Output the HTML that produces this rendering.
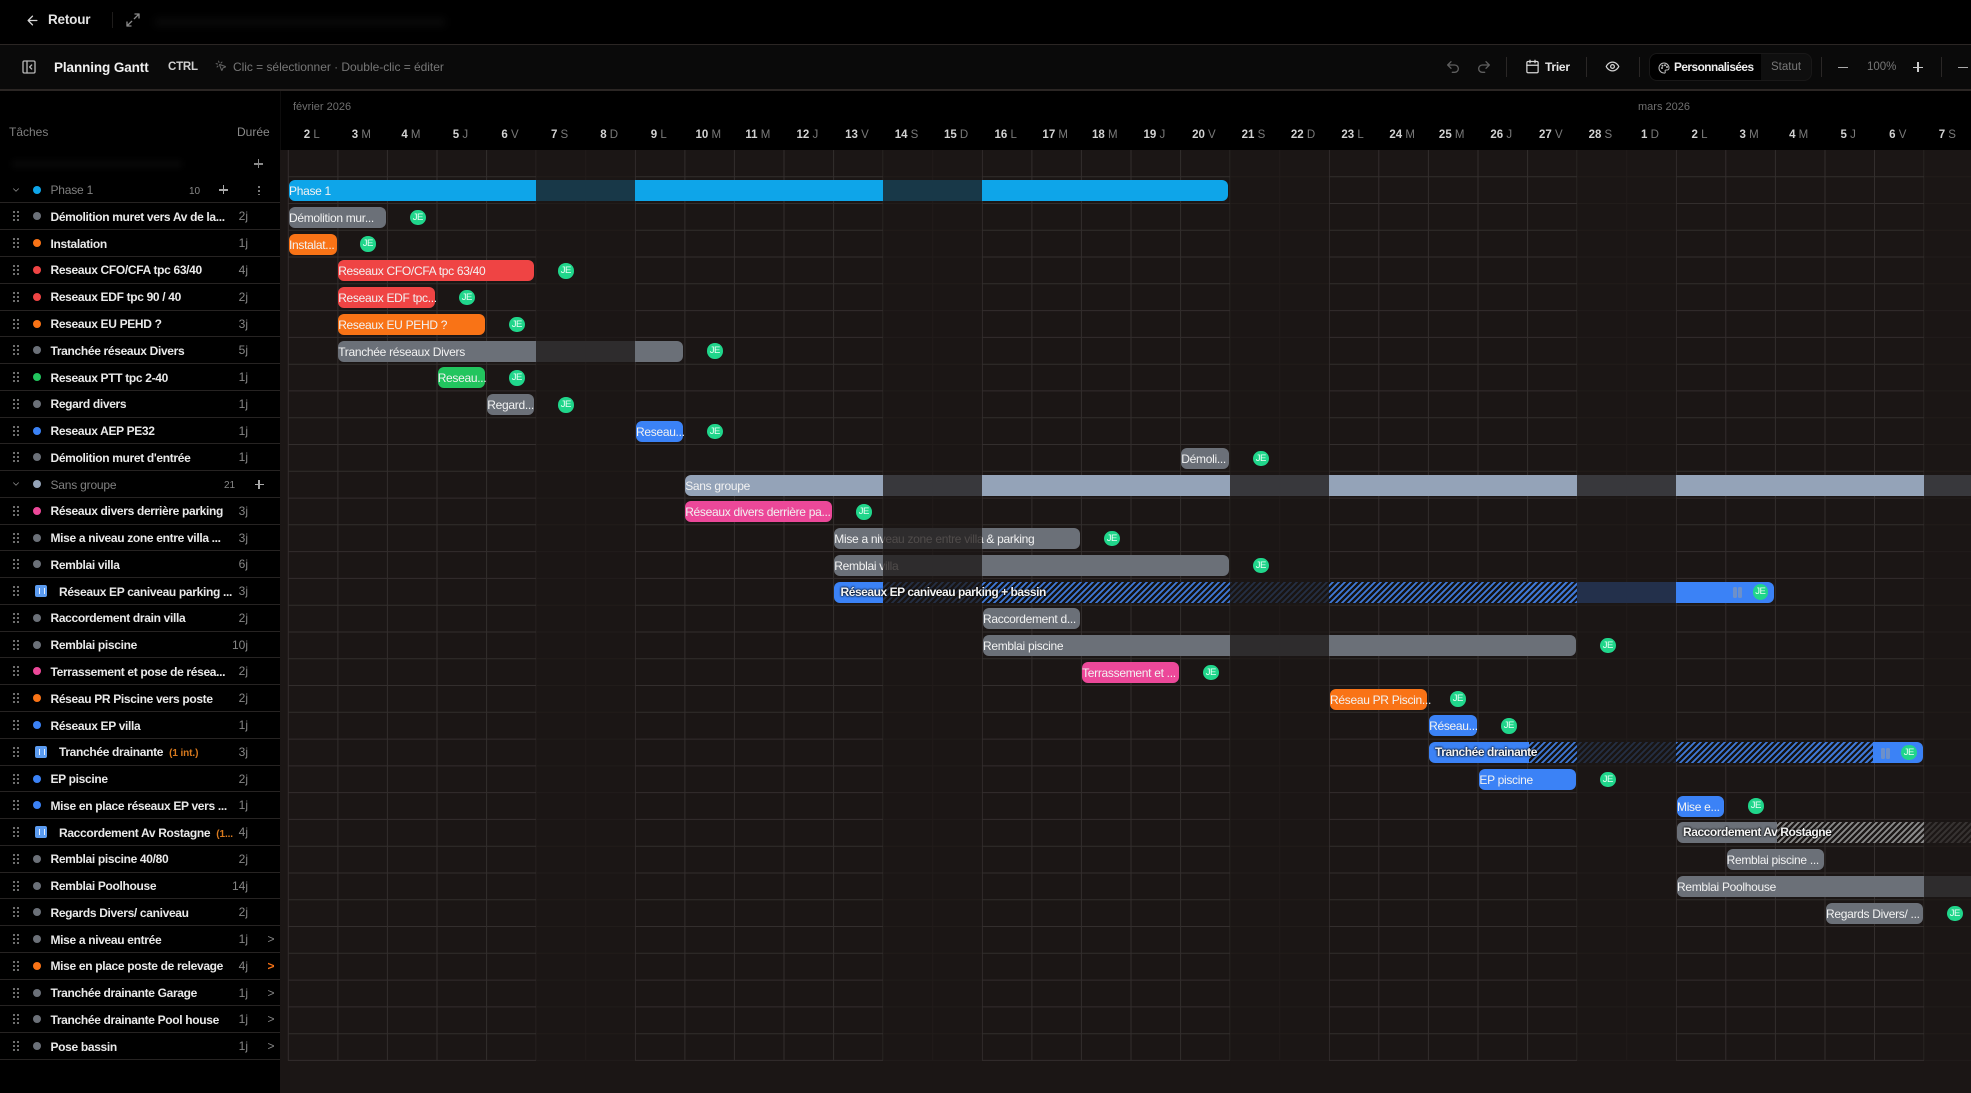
<!DOCTYPE html>
<html lang="fr"><head><meta charset="utf-8"><title>Planning Gantt</title>
<style>
*{box-sizing:border-box}
html,body{margin:0;padding:0;background:#000;width:1971px;height:1093px;overflow:hidden}
body{position:relative;font-family:"Liberation Sans",Arial,sans-serif;font-size:12px;color:#eee}
.abs{position:absolute}
svg{position:absolute;fill:none;stroke:currentColor;stroke-width:2;stroke-linecap:round;stroke-linejoin:round}
.sep{position:absolute;width:1px;background:#2a2726}
#top{position:absolute;left:0;top:0;width:1971px;height:45px;background:#000;border-bottom:1px solid #2b2624}
#bar{position:absolute;left:0;top:45px;width:1971px;height:46px;background:#0a0a0a;border-bottom:2px solid #2b2624}
.t{position:absolute;white-space:nowrap}
#hdr{position:absolute;left:0;top:91px;width:1971px;height:59px;background:#000}
#days{position:absolute;left:287px;top:126px;display:flex;height:18px}
#days span{display:block;width:49.57px;flex:none;text-align:center;color:#7a7a7a;font-size:11.5px;line-height:18px;white-space:nowrap}
#days b{color:#d2d2d2;font-weight:bold}
#side{position:absolute;left:0;top:150px;width:280px;height:943px;background:#000}
.s{position:relative;height:26.78px;border-bottom:1px solid #262322;line-height:25px}
.s i{position:absolute}
.h{left:12px;top:7px;width:8px;height:12px;background:radial-gradient(circle,#7d7d7d .95px,transparent 1.2px) 0 0/4px 4px}
.d{left:33px;top:9px;width:8px;height:8px;border-radius:50%}
.p{left:35px;top:7px;width:12px;height:12px;border-radius:2px;background:#5b9bf0}
.p:after{content:"";position:absolute;left:4px;top:3px;width:4px;height:6px;border-left:1.5px solid #e8f0ff;border-right:1.5px solid #e8f0ff}
.n{position:absolute;left:50.5px;top:1.5px;white-space:nowrap;color:#e9e9e9;font-size:12px;font-weight:bold;letter-spacing:-.33px}
.n.i{left:59px}
.n small{color:#d97a1e;font-size:10px;font-weight:bold;margin-left:3px;letter-spacing:-.1px}
.n.g{color:#808080;font-weight:normal;font-size:12px;letter-spacing:-.2px;top:1.5px}
.j{position:absolute;right:32px;top:1px;color:#868686;font-size:12px}
.c{position:absolute;left:267.5px;top:1px;color:#888;font-size:12px}
#grid{position:absolute;left:280px;top:150px;width:1691px;height:943px;background:#1b1615}
.we{position:absolute;top:150px;height:911px;background:rgba(27,22,21,.76);z-index:2}
#g{position:absolute;left:0;top:176.7px;width:1971px;height:900px;overflow:hidden}
.r{position:relative;height:26.78px}
.b{position:absolute;top:3.4px;height:21px;border-radius:6px;line-height:22px;color:#f2f2f2;font-size:12px;letter-spacing:-.3px;white-space:nowrap;z-index:1}
.a{position:absolute;top:6.2px;width:15.5px;height:15.5px;border-radius:50%;background:#20d68b;color:#e9fff5;font-size:9.5px;line-height:15.5px;text-align:center;font-weight:normal;z-index:3;letter-spacing:-.6px}
.gr{background:#6b7078}.or{background:#f97316}.re{background:#ef4444}.gn{background:#22c55e}.bl{background:#3b82f6}.pk{background:#ec4899}.sl{background:#94a3b8}.sk{background:#0ea5e9}
.ha{position:absolute;top:3.4px;height:21px;z-index:1;background:repeating-linear-gradient(-45deg,#3f78d6 0,#3f78d6 1.8px,#141314 1.8px,#141314 4.24px)}
.hg{background:repeating-linear-gradient(-45deg,#8b8b8b 0,#8b8b8b 1.8px,#1e1a19 1.8px,#1e1a19 4.24px)}
.lb{position:absolute;top:3.4px;line-height:21px;font-size:12px;font-weight:bold;letter-spacing:-.45px;color:#f4f4f4;white-space:nowrap;z-index:3;text-shadow:0 0 2px #000,0 0 2px #000}
.pa{position:absolute;top:9px;width:3.5px;height:11px;border-radius:1.5px;background:#7f94ba;opacity:.75;z-index:3}
</style></head><body>

<div id="top">
<svg style="left:25px;top:13px;color:#d5d5d5" width="15" height="15" viewBox="0 0 24 24"><path d="M19 12H5M12 19l-7-7 7-7"/></svg>
<span class="t" style="left:48px;top:12px;font-size:13.5px;color:#e3e3e3;font-weight:bold;line-height:16px;letter-spacing:-.2px">Retour</span>
<div class="sep" style="left:112px;top:12px;height:16px;background:#1e1c1b"></div>
<svg style="left:125px;top:12px;color:#8a8a8a" width="16" height="16" viewBox="0 0 24 24" stroke-width="1.6"><path d="M21 3l-7 7M3 21l7-7M15 3h6v6M9 21H3v-6"/></svg>
<div class="abs" style="left:155px;top:18px;width:290px;height:8px;background:#0a0a0a;filter:blur(4px)"></div>
</div>

<div id="bar">
<svg style="left:21px;top:14px;color:#b5b5b5" width="16" height="16" viewBox="0 0 24 24"><rect x="3" y="3" width="18" height="18" rx="2"/><path d="M9 3v18M16 15l-3-3 3-3"/></svg>
<span class="t" style="left:54px;top:14px;font-size:13.5px;font-weight:bold;color:#f0f0f0;line-height:17px;letter-spacing:-.1px">Planning Gantt</span>
<span class="t" style="left:168px;top:14px;font-size:11.5px;font-weight:bold;color:#d0d0d0;line-height:16px;letter-spacing:-.2px">CTRL</span>
<svg style="left:215px;top:15px;color:#666" width="12" height="12" viewBox="0 0 24 24"><path d="M14 4.1 12 6M5.1 8l-2.9-.8M6 12l-1.9 2M7.2 2.2 8 5.1M9.04 9.65a.5.5 0 0 1 .61-.61l11 4a.5.5 0 0 1 .02.94l-4.3 1.6a1 1 0 0 0-.6.6l-1.6 4.3a.5.5 0 0 1-.94-.02z"/></svg>
<span class="t" style="left:233px;top:14px;font-size:12px;color:#767676;line-height:16px;letter-spacing:-.03px">Clic = sélectionner · Double-clic = éditer</span>

<svg style="left:1445px;top:14px;color:#5f5f5f" width="16" height="16" viewBox="0 0 24 24"><path d="M9 14 4 9l5-5M4 9h10.5a5.5 5.5 0 0 1 0 11H11"/></svg>
<svg style="left:1476px;top:14px;color:#5f5f5f" width="16" height="16" viewBox="0 0 24 24"><path d="M15 14l5-5-5-5M20 9H9.5a5.5 5.5 0 0 0 0 11H13"/></svg>
<div class="sep" style="left:1506px;top:12px;height:20px"></div>
<svg style="left:1525px;top:14px;color:#d8d8d8" width="15" height="15" viewBox="0 0 24 24"><path d="M8 2v4M16 2v4M3 10h18"/><rect x="3" y="4" width="18" height="18" rx="2"/></svg>
<span class="t" style="left:1545px;top:14px;font-size:12px;font-weight:bold;color:#e6e6e6;line-height:16px;letter-spacing:-.25px">Trier</span>
<div class="sep" style="left:1586px;top:12px;height:20px"></div>
<svg style="left:1605px;top:14px;color:#d4d4d4" width="15" height="15" viewBox="0 0 24 24"><path d="M2 12s3-7 10-7 10 7 10 7-3 7-10 7-10-7-10-7Z"/><circle cx="12" cy="12" r="3"/></svg>
<div class="sep" style="left:1639px;top:12px;height:20px"></div>
<div class="abs" style="left:1649px;top:8px;width:163px;height:28px;background:#0f0f0f;border:1px solid #191818;border-radius:8px"></div>
<div class="abs" style="left:1650px;top:9px;width:111px;height:26px;background:#000;border-radius:7px 0 0 7px"></div>
<svg style="left:1658px;top:17px;color:#bdbdbd" width="12" height="12" viewBox="0 0 24 24"><path d="M12 22a10 10 0 1 1 10-10c0 2.5-2 4-4 4h-2a2 2 0 0 0-1.5 3.3A2 2 0 0 1 12 22z"/><circle cx="8" cy="12" r="1"/><circle cx="9" cy="7.5" r="1"/><circle cx="14" cy="6.5" r="1"/><circle cx="18" cy="10" r="1"/></svg>
<span class="t" style="left:1674px;top:14px;font-size:11.8px;font-weight:bold;color:#ededed;line-height:16px;letter-spacing:-.5px">Personnalisées</span>
<span class="t" style="left:1771px;top:14px;font-size:11.5px;color:#777;line-height:16px">Statut</span>
<div class="sep" style="left:1821px;top:12px;height:20px"></div>
<span class="abs" style="left:1838px;top:21.5px;width:10px;height:1.6px;background:#aaa"></span>
<span class="t" style="left:1867px;top:14px;font-size:11.5px;color:#777;line-height:16px">100%</span>
<span class="abs" style="left:1913px;top:21.5px;width:10px;height:1.6px;background:#ccc"></span>
<span class="abs" style="left:1917.2px;top:17.3px;width:1.6px;height:10px;background:#ccc"></span>
<div class="sep" style="left:1941px;top:12px;height:20px"></div>
<span class="abs" style="left:1958px;top:21.5px;width:10px;height:1.6px;background:#aaa"></span>
</div>

<div id="hdr">
<span class="t" style="left:9px;top:33px;color:#7e7e7e;font-size:12px;line-height:16px">Tâches</span>
<span class="t" style="left:237px;top:33px;color:#8a8a8a;font-size:12px;line-height:16px">Durée</span>
<span class="t" style="left:293px;top:9px;color:#6f6f6f;font-size:11px;line-height:15px">février 2026</span>
<span class="t" style="left:1638px;top:9px;color:#6f6f6f;font-size:11px;line-height:15px">mars 2026</span>
<div class="abs" style="left:280px;top:0;width:1px;height:59px;background:#0d0c0c"></div>
</div>
<div id="days"><span><b>2</b> L</span><span><b>3</b> M</span><span><b>4</b> M</span><span><b>5</b> J</span><span><b>6</b> V</span><span><b>7</b> S</span><span><b>8</b> D</span><span><b>9</b> L</span><span><b>10</b> M</span><span><b>11</b> M</span><span><b>12</b> J</span><span><b>13</b> V</span><span><b>14</b> S</span><span><b>15</b> D</span><span><b>16</b> L</span><span><b>17</b> M</span><span><b>18</b> M</span><span><b>19</b> J</span><span><b>20</b> V</span><span><b>21</b> S</span><span><b>22</b> D</span><span><b>23</b> L</span><span><b>24</b> M</span><span><b>25</b> M</span><span><b>26</b> J</span><span><b>27</b> V</span><span><b>28</b> S</span><span><b>1</b> D</span><span><b>2</b> L</span><span><b>3</b> M</span><span><b>4</b> M</span><span><b>5</b> J</span><span><b>6</b> V</span><span><b>7</b> S</span></div>

<div id="grid"></div>
<svg style="left:0;top:0;color:#332e2d;stroke-width:1;stroke-linecap:butt" width="1971" height="1093" viewBox="0 0 1971 1093"><path d="M288.3 150V1060.8M337.9 150V1060.8M387.4 150V1060.8M437 150V1060.8M486.6 150V1060.8M536.2 150V1060.8M585.7 150V1060.8M635.3 150V1060.8M684.9 150V1060.8M734.4 150V1060.8M784 150V1060.8M833.6 150V1060.8M883.1 150V1060.8M932.7 150V1060.8M982.3 150V1060.8M1031.9 150V1060.8M1081.4 150V1060.8M1131 150V1060.8M1180.6 150V1060.8M1230.1 150V1060.8M1279.7 150V1060.8M1329.3 150V1060.8M1378.8 150V1060.8M1428.4 150V1060.8M1478 150V1060.8M1527.6 150V1060.8M1577.1 150V1060.8M1626.7 150V1060.8M1676.3 150V1060.8M1725.8 150V1060.8M1775.4 150V1060.8M1825 150V1060.8M1874.5 150V1060.8M1924.1 150V1060.8"/><path d="M288 176.7H1971M288 203.5H1971M288 230.3H1971M288 257H1971M288 283.8H1971M288 310.6H1971M288 337.4H1971M288 364.2H1971M288 390.9H1971M288 417.7H1971M288 444.5H1971M288 471.3H1971M288 498.1H1971M288 524.8H1971M288 551.6H1971M288 578.4H1971M288 605.2H1971M288 632H1971M288 658.7H1971M288 685.5H1971M288 712.3H1971M288 739.1H1971M288 765.9H1971M288 792.6H1971M288 819.4H1971M288 846.2H1971M288 873H1971M288 899.8H1971M288 926.5H1971M288 953.3H1971M288 980.1H1971M288 1006.9H1971M288 1033.7H1971M288 1060.4H1971"/></svg>
<div class="we" style="left:535.85px;width:99.14px"></div>
<div class="we" style="left:882.84px;width:99.14px"></div>
<div class="we" style="left:1229.83px;width:99.14px"></div>
<div class="we" style="left:1576.82px;width:99.14px"></div>
<div class="we" style="left:1923.81px;width:48px"></div>

<div id="g">
<div class="r"><div class="b sk" style="left:289px;width:938.6px;border-radius:6px"><span style="position:relative">Phase 1</span></div></div>
<div class="r"><div class="b gr" style="left:289px;width:97px">Démolition mur...</div><div class="a" style="left:410px">JE</div></div>
<div class="r"><div class="b or" style="left:289px;width:47.5px">Instalat...</div><div class="a" style="left:360px">JE</div></div>
<div class="r"><div class="b re" style="left:338.2px;width:195.9px">Reseaux CFO/CFA tpc 63/40</div><div class="a" style="left:558px">JE</div></div>
<div class="r"><div class="b re" style="left:338.2px;width:97px">Reseaux EDF tpc...</div><div class="a" style="left:459px">JE</div></div>
<div class="r"><div class="b or" style="left:338.2px;width:147.1px">Reseaux EU PEHD ?</div><div class="a" style="left:509px">JE</div></div>
<div class="r"><div class="b gr" style="left:338.2px;width:344.4px">Tranchée réseaux Divers</div><div class="a" style="left:707px">JE</div></div>
<div class="r"><div class="b gn" style="left:437.7px;width:47.6px">Reseau...</div><div class="a" style="left:509px">JE</div></div>
<div class="r"><div class="b gr" style="left:487.3px;width:47px">Regard...</div><div class="a" style="left:558px">JE</div></div>
<div class="r"><div class="b bl" style="left:636px;width:47px">Reseau...</div><div class="a" style="left:707px">JE</div></div>
<div class="r"><div class="b gr" style="left:1181.3px;width:47.5px">Démoli...</div><div class="a" style="left:1253px">JE</div></div>
<div class="r"><div class="b sl" style="left:685.2px;width:1300px">Sans groupe</div></div>
<div class="r"><div class="b pk" style="left:685.2px;width:146.6px">Réseaux divers derrière pa...</div><div class="a" style="left:856px">JE</div></div>
<div class="r"><div class="b gr" style="left:834.3px;width:245.8px">Mise a niveau zone entre villa &amp; parking</div><div class="a" style="left:1104px">JE</div></div>
<div class="r"><div class="b gr" style="left:834.3px;width:394.5px">Remblai villa</div><div class="a" style="left:1253px">JE</div></div>
<div class="r"><div class="b bl" style="left:834.3px;width:940px"></div><div class="ha" style="left:882.84px;width:694px"></div><div class="lb" style="left:840.5px">Réseaux EP caniveau parking + bassin</div><div class="pa" style="left:1733px"></div><div class="pa" style="left:1738px"></div><div class="a" style="left:1752.5px">JE</div></div>
<div class="r"><div class="b gr" style="left:983px;width:97px">Raccordement d...</div></div>
<div class="r"><div class="b gr" style="left:983px;width:593px">Remblai piscine</div><div class="a" style="left:1600px">JE</div></div>
<div class="r"><div class="b pk" style="left:1082.1px;width:97px">Terrassement et ...</div><div class="a" style="left:1203px">JE</div></div>
<div class="r"><div class="b or" style="left:1330px;width:96.6px">Réseau PR Piscin...</div><div class="a" style="left:1450px">JE</div></div>
<div class="r"><div class="b bl" style="left:1429.1px;width:47.5px">Réseau...</div><div class="a" style="left:1501px">JE</div></div>
<div class="r"><div class="b bl" style="left:1429.1px;width:493.5px"></div><div class="ha" style="left:1529px;width:344px"></div><div class="lb" style="left:1435px">Tranchée drainante</div><div class="pa" style="left:1881px"></div><div class="pa" style="left:1886px"></div><div class="a" style="left:1901px">JE</div></div>
<div class="r"><div class="b bl" style="left:1479.4px;width:96.6px">EP piscine</div><div class="a" style="left:1600px">JE</div></div>
<div class="r"><div class="b bl" style="left:1677px;width:46.8px">Mise e...</div><div class="a" style="left:1748px">JE</div></div>
<div class="r"><div class="b gr" style="left:1677px;width:105px"></div><div class="ha hg" style="left:1777px;width:200px"></div><div class="lb" style="left:1683px">Raccordement Av Rostagne</div></div>
<div class="r"><div class="b gr" style="left:1726.6px;width:97px">Remblai piscine ...</div></div>
<div class="r"><div class="b gr" style="left:1677px;width:320px">Remblai Poolhouse</div></div>
<div class="r"><div class="b gr" style="left:1826px;width:96.6px">Regards Divers/ ...</div><div class="a" style="left:1947px">JE</div></div>
</div>

<div id="side">
<div class="s" style="height:26.7px;border-bottom:0">
<span class="abs" style="left:254px;top:13.2px;width:9px;height:1.5px;background:#8a8a8a"></span>
<span class="abs" style="left:257.8px;top:9.4px;width:1.5px;height:9px;background:#8a8a8a"></span>
<div class="abs" style="left:12px;top:10px;width:170px;height:8px;background:#070707;filter:blur(3px)"></div>
</div>
<div class="s"><svg style="left:11px;top:8px;color:#8a8a8a" width="10" height="10" viewBox="0 0 24 24"><path d="M6 9l6 6 6-6"/></svg><i class="d" style="background:#0ea5e9"></i><span class="n g">Phase 1</span>
<span class="t" style="left:189px;top:2px;font-size:10px;color:#888">10</span>
<span class="abs" style="left:219px;top:12.5px;width:9px;height:1.5px;background:#aaa"></span><span class="abs" style="left:222.8px;top:8.7px;width:1.5px;height:9px;background:#aaa"></span>
<span class="abs" style="left:257.5px;top:8px;width:2px;height:10px;background:radial-gradient(circle,#999 .9px,transparent 1.1px) 0 0/2px 4px"></span></div>
<div class="s"><i class="h"></i><i class="d gr"></i><span class="n">Démolition muret vers Av de la...</span><span class="j">2j</span></div>
<div class="s"><i class="h"></i><i class="d or"></i><span class="n">Instalation</span><span class="j">1j</span></div>
<div class="s"><i class="h"></i><i class="d re"></i><span class="n">Reseaux CFO/CFA tpc 63/40</span><span class="j">4j</span></div>
<div class="s"><i class="h"></i><i class="d re"></i><span class="n">Reseaux EDF tpc 90 / 40</span><span class="j">2j</span></div>
<div class="s"><i class="h"></i><i class="d or"></i><span class="n">Reseaux EU PEHD ?</span><span class="j">3j</span></div>
<div class="s"><i class="h"></i><i class="d gr"></i><span class="n">Tranchée réseaux Divers</span><span class="j">5j</span></div>
<div class="s"><i class="h"></i><i class="d gn"></i><span class="n">Reseaux PTT tpc 2-40</span><span class="j">1j</span></div>
<div class="s"><i class="h"></i><i class="d gr"></i><span class="n">Regard divers</span><span class="j">1j</span></div>
<div class="s"><i class="h"></i><i class="d bl"></i><span class="n">Reseaux AEP PE32</span><span class="j">1j</span></div>
<div class="s"><i class="h"></i><i class="d gr"></i><span class="n">Démolition muret d'entrée</span><span class="j">1j</span></div>
<div class="s"><svg style="left:11px;top:8px;color:#8a8a8a" width="10" height="10" viewBox="0 0 24 24"><path d="M6 9l6 6 6-6"/></svg><i class="d sl"></i><span class="n g">Sans groupe</span>
<span class="t" style="left:224px;top:2px;font-size:10px;color:#888">21</span>
<span class="abs" style="left:254.5px;top:12.5px;width:9px;height:1.5px;background:#aaa"></span><span class="abs" style="left:258.3px;top:8.7px;width:1.5px;height:9px;background:#aaa"></span></div>
<div class="s"><i class="h"></i><i class="d pk"></i><span class="n">Réseaux divers derrière parking</span><span class="j">3j</span></div>
<div class="s"><i class="h"></i><i class="d gr"></i><span class="n">Mise a niveau zone entre villa ...</span><span class="j">3j</span></div>
<div class="s"><i class="h"></i><i class="d gr"></i><span class="n">Remblai villa</span><span class="j">6j</span></div>
<div class="s"><i class="h"></i><i class="p"></i><span class="n i">Réseaux EP caniveau parking ...</span><span class="j">3j</span></div>
<div class="s"><i class="h"></i><i class="d gr"></i><span class="n">Raccordement drain villa</span><span class="j">2j</span></div>
<div class="s"><i class="h"></i><i class="d gr"></i><span class="n">Remblai piscine</span><span class="j">10j</span></div>
<div class="s"><i class="h"></i><i class="d pk"></i><span class="n">Terrassement et pose de résea...</span><span class="j">2j</span></div>
<div class="s"><i class="h"></i><i class="d or"></i><span class="n">Réseau PR Piscine vers poste</span><span class="j">2j</span></div>
<div class="s"><i class="h"></i><i class="d bl"></i><span class="n">Réseaux EP villa</span><span class="j">1j</span></div>
<div class="s"><i class="h"></i><i class="p"></i><span class="n i">Tranchée drainante <small>(1 int.)</small></span><span class="j">3j</span></div>
<div class="s"><i class="h"></i><i class="d bl"></i><span class="n">EP piscine</span><span class="j">2j</span></div>
<div class="s"><i class="h"></i><i class="d bl"></i><span class="n">Mise en place réseaux EP vers ...</span><span class="j">1j</span></div>
<div class="s"><i class="h"></i><i class="p"></i><span class="n i">Raccordement Av Rostagne <small>(1...</small></span><span class="j">4j</span></div>
<div class="s"><i class="h"></i><i class="d gr"></i><span class="n">Remblai piscine 40/80</span><span class="j">2j</span></div>
<div class="s"><i class="h"></i><i class="d gr"></i><span class="n">Remblai Poolhouse</span><span class="j">14j</span></div>
<div class="s"><i class="h"></i><i class="d gr"></i><span class="n">Regards Divers/ caniveau</span><span class="j">2j</span></div>
<div class="s"><i class="h"></i><i class="d gr"></i><span class="n">Mise a niveau entrée</span><span class="j">1j</span><span class="c">&gt;</span></div>
<div class="s"><i class="h"></i><i class="d or"></i><span class="n">Mise en place poste de relevage</span><span class="j">4j</span><span class="c" style="color:#f97316;font-weight:bold">&gt;</span></div>
<div class="s"><i class="h"></i><i class="d gr"></i><span class="n">Tranchée drainante Garage</span><span class="j">1j</span><span class="c">&gt;</span></div>
<div class="s"><i class="h"></i><i class="d gr"></i><span class="n">Tranchée drainante Pool house</span><span class="j">1j</span><span class="c">&gt;</span></div>
<div class="s"><i class="h"></i><i class="d gr"></i><span class="n">Pose bassin</span><span class="j">1j</span><span class="c">&gt;</span></div>
</div>
</body></html>
